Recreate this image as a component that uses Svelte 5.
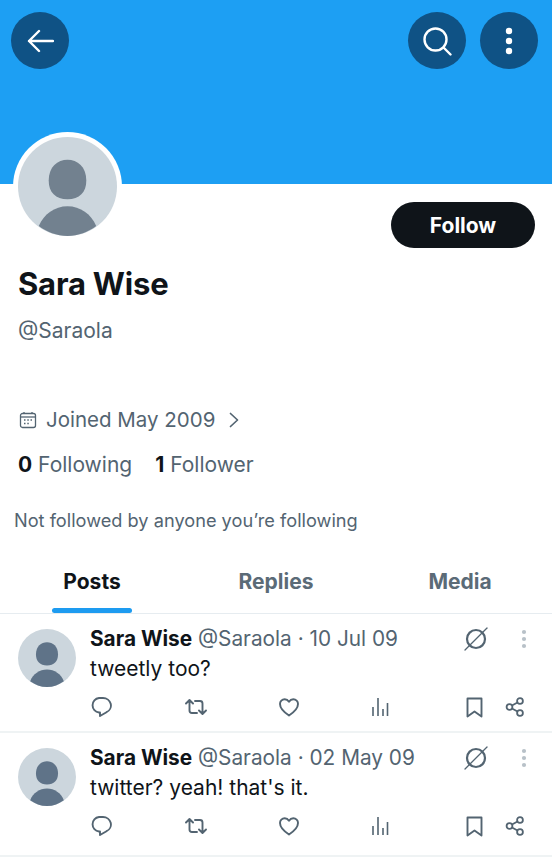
<script>
	const tabs = [
		{ label: 'Posts', active: true },
		{ label: 'Replies', active: false },
		{ label: 'Media', active: false },
	];

	const posts = [
		{ date: '10 Jul 09', text: 'tweetly too?' },
		{ date: '02 May 09', text: "twitter? yeah! that's it." },
	];
</script>

{#snippet person(size, tone)}
	<svg class="person" width={size} height={size} viewBox="0 0 100 100" aria-hidden="true">
		<circle cx="50" cy="50" r="50" fill="#ccd6dd" />
		<path d="M50 23c10 0 19 7 19 21 0 12-7 19-19 19s-19-7-19-19c0-14 9-21 19-21z" fill={tone} />
		<path d="M21 90c5-12 16-20 29-20s24 8 29 20c-8 6-18 10-29 10s-21-4-29-10z" fill={tone} />
	</svg>
{/snippet}

<main class="page">
	<header class="banner">
		<button class="round" aria-label="Back">
			<svg width="28" height="28" viewBox="0 0 28 28" fill="none" stroke="#fff" stroke-width="2.4" stroke-linecap="round" stroke-linejoin="round">
				<path d="M3 14h24M13 4 3 14l10 10" />
			</svg>
		</button>
		<div class="banner-right">
			<button class="round" aria-label="Search">
				<svg width="30" height="30" viewBox="0 0 30 30" fill="none" stroke="#fff" stroke-width="2.4" stroke-linecap="round">
					<circle cx="13.500" cy="13.500" r="11" />
					<path d="m21.500 21.500 7 7" />
				</svg>
			</button>
			<button class="round" aria-label="More">
				<svg width="8" height="28" viewBox="0 0 8 28" fill="#fff">
					<circle cx="4" cy="4" r="3.200" />
					<circle cx="4" cy="14" r="3.200" />
					<circle cx="4" cy="24" r="3.200" />
				</svg>
			</button>
		</div>
	</header>

	<section class="profile">
		<div class="profile-top">
			<div class="avatar">{@render person(99, '#72818f')}</div>
			<button class="follow">Follow</button>
		</div>
		<h1>Sara Wise</h1>
		<p class="handle">@Saraola</p>
		<p class="joined">
			<svg width="18" height="18" viewBox="0 0 18 18" fill="none" stroke="#536471" stroke-width="1.300">
				<rect x="1.500" y="2.500" width="15" height="14" rx="2" />
				<path d="M1.500 6h15" />
				<path d="M5 1v2M13 1v2" />
				<path d="M5 9h1.500M8.300 9h1.500M11.500 9h1.500M5 12.500h1.500M8.300 12.500h1.500" stroke-width="1.600" />
			</svg>
			<span>Joined May 2009</span>
			<svg class="chevron" width="12" height="16" viewBox="0 0 12 16" fill="none" stroke="#536471" stroke-width="1.700" stroke-linecap="round" stroke-linejoin="round">
				<path d="m2.500 1.500 7 6.500-7 6.500" />
			</svg>
		</p>
		<p class="counts">
			<span><b>0</b> Following</span>
			<span><b>1</b> Follower</span>
		</p>
		<p class="followed">Not followed by anyone you’re following</p>
	</section>

	<nav class="tabs">
		{#each tabs as tab}
			<div class="tab" class:active={tab.active}>{tab.label}</div>
		{/each}
	</nav>

	{#each posts as post}
		<article class="post">
			<div class="post-avatar">{@render person(58, '#5f7388')}</div>
			<div class="post-body">
				<div class="post-head">
					<div class="post-meta">
						<b>Sara Wise</b>
						<span>@Saraola · {post.date}</span>
					</div>
					<svg class="grok" width="28" height="28" viewBox="0 0 28 28" fill="none" stroke="#536471" stroke-linecap="round">
						<circle cx="14" cy="14" r="9" stroke-width="2.200" />
						<path d="M3 25 25 3" stroke-width="1.300" />
					</svg>
					<svg class="dots" width="6" height="20" viewBox="0 0 6 20" fill="#b8c1c8">
						<circle cx="3" cy="3" r="2.100" />
						<circle cx="3" cy="10" r="2.100" />
						<circle cx="3" cy="17" r="2.100" />
					</svg>
				</div>
				<p class="post-text">{post.text}</p>
				<div class="actions">
					<svg width="22" height="22" viewBox="0 0 22 22" fill="none" stroke="#536471" stroke-width="1.900" stroke-linejoin="round" stroke-linecap="round">
						<path d="M9 2h4a8 7.500 0 0 1 3.500 14.200L10 20v-3.500H9A7.300 7.300 0 0 1 9 2z" />
					</svg>
					<svg width="22" height="18" viewBox="0 0 22 18" fill="none" stroke="#536471" stroke-width="1.900" stroke-linejoin="round" stroke-linecap="round">
						<path d="M1 5.500 4.500 2 8 5.500M4.500 2.500V12.500a2.500 2.500 0 0 0 2.500 2.500H12" />
						<path d="M21 12.500 17.500 16 14 12.500M17.500 15.500V5.500A2.500 2.500 0 0 0 15 3H10" />
					</svg>
					<svg width="22" height="20" viewBox="0 0 22 20" fill="none" stroke="#536471" stroke-width="1.900" stroke-linejoin="round">
						<path d="M11 18.500C5 14.500 2 11 2 7A4.700 4.700 0 0 1 6.700 2.200C8.500 2.200 10 3.200 11 4.800 12 3.200 13.500 2.200 15.300 2.200A4.700 4.700 0 0 1 20 7c0 4-3 7.500-9 11.500z" />
					</svg>
					<svg width="18" height="20" viewBox="0 0 18 20" fill="none" stroke="#536471" stroke-width="1.600">
						<path d="M2 10v9M7 1v18M12 12v7M16.500 6v13" />
					</svg>
					<svg class="bookmark" width="17" height="21" viewBox="0 0 17 21" fill="none" stroke="#536471" stroke-width="1.900" stroke-linejoin="round">
						<path d="M1.500 1.500h14v18l-7-5-7 5z" />
					</svg>
					<svg class="share" width="20" height="20" viewBox="0 0 20 20" fill="none" stroke="#536471" stroke-width="1.800">
						<circle cx="4.500" cy="10" r="2.900" />
						<circle cx="15" cy="4" r="2.900" />
						<circle cx="15" cy="16" r="2.900" />
						<path d="M7 8.500 12.500 5.500M7 11.500l5.500 3" />
					</svg>
				</div>
			</div>
		</article>
	{/each}
</main>

<style>
	:global(body) {
		background: #fff;
	}

	.page {
		width: 552px;
		height: 868px;
		overflow: hidden;
		font-family: Inter, 'Liberation Sans', sans-serif;
		color: #0f1419;
	}

	p,
	h1 {
		margin: 0;
	}

	.banner {
		display: flex;
		justify-content: space-between;
		align-items: flex-start;
		height: 184px;
		padding: 12px 14px 0 11px;
		box-sizing: border-box;
		background: #1d9ff3;
	}

	.banner-right {
		display: flex;
		gap: 14px;
	}

	.round {
		display: flex;
		align-items: center;
		justify-content: center;
		width: 58px;
		height: 57px;
		padding: 0;
		border: 0;
		border-radius: 50%;
		background: #0f5285;
	}

	.profile {
		padding: 0 17px 0 18px;
	}

	.profile-top {
		display: flex;
		justify-content: space-between;
		align-items: flex-start;
	}

	.avatar {
		display: flex;
		margin: -52px 0 0 -5px;
		padding: 5px;
		border-radius: 50%;
		background: #fff;
	}

	.person {
		display: block;
	}

	.follow {
		width: 144px;
		height: 46px;
		margin: 18px 0 0;
		border: 0;
		border-radius: 23px;
		background: #0f1419;
		color: #fff;
		font: 700 21px Inter, sans-serif;
	}

	h1 {
		margin-top: 16px;
		font-size: 31px;
		line-height: 40px;
		font-weight: 700;
		letter-spacing: -0.2px;
	}

	.handle {
		margin-top: 15px;
		font-size: 21px;
		line-height: 24px;
		color: #536471;
	}

	.joined {
		display: flex;
		align-items: center;
		gap: 9px;
		margin: 63px 0 0 1px;
		font-size: 20.5px;
		line-height: 28px;
		color: #536471;
	}

	.chevron {
		margin-left: 4px;
	}

	.counts {
		display: flex;
		gap: 23px;
		margin-top: 17px;
		font-size: 21px;
		line-height: 28px;
		color: #536471;
	}

	.counts b {
		color: #0f1419;
	}

	.followed {
		margin: 29px 0 0 -4px;
		font-size: 18.2px;
		line-height: 24px;
		color: #536471;
	}

	.tabs {
		display: grid;
		grid-template-columns: repeat(3, 184px);
		margin-top: 22px;
		border-bottom: 1px solid #e6ecf0;
	}

	.tab {
		height: 59px;
		padding-top: 14px;
		box-sizing: border-box;
		text-align: center;
		font-size: 21px;
		line-height: 28px;
		font-weight: 700;
		color: #5b6b77;
		position: relative;
	}

	.tab.active {
		color: #0f1419;
	}

	.tab.active::after {
		content: '';
		position: absolute;
		left: 52px;
		bottom: 0;
		width: 80px;
		height: 5px;
		border-radius: 3px;
		background: #1d9bf0;
	}

	.post {
		display: flex;
		gap: 14px;
		height: 119px;
		padding: 15px 0 0 18px;
		box-sizing: border-box;
		border-bottom: 2px solid #eff3f4;
	}

	.post:last-child {
		height: 124px;
	}

	.post-avatar {
		flex: none;
	}

	.post-body {
		flex: 1;
		min-width: 0;
		margin-top: -2px;
	}

	.post-head {
		display: flex;
		align-items: center;
		height: 24px;
		padding-right: 25px;
	}

	.post-meta {
		flex: 1;
		font-size: 20.8px;
		line-height: 24px;
		white-space: nowrap;
		color: #536471;
	}

	.post-meta b {
		color: #0f1419;
	}

	.dots {
		margin-left: 31px;
	}

	.post-text {
		margin-top: 4px;
		font-size: 21px;
		line-height: 28px;
	}

	.actions {
		display: flex;
		align-items: center;
		height: 26px;
		margin-top: 11px;
	}

	.actions svg {
		flex: none;
	}

	.actions svg:nth-child(2) {
		margin-left: 73px;
	}

	.actions svg:nth-child(3) {
		margin-left: 71px;
	}

	.actions svg:nth-child(4) {
		margin-left: 71px;
	}

	.bookmark {
		margin-left: 77px;
	}

	.share {
		margin-left: 22px;
	}
</style>
